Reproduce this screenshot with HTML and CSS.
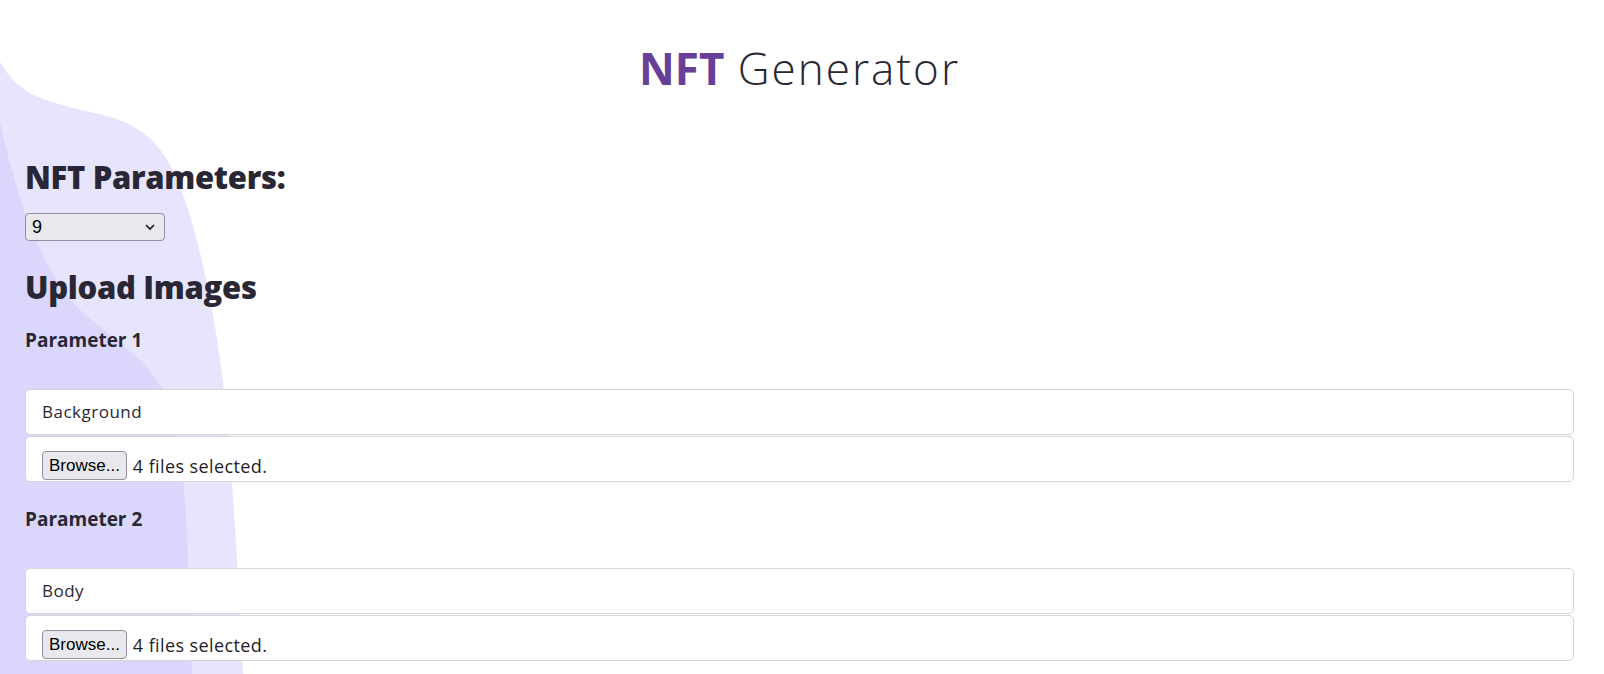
FILE: index.html
```html
<!DOCTYPE html>
<html lang="en">
<head>
<meta charset="utf-8">
<title>NFT Generator</title>
<link rel="stylesheet" href="styles.css">
</head>
<body>
<svg class="blob" width="300" height="674" viewBox="0 0 300 674" aria-hidden="true">
  <path class="blob-light" d="M0 62 C 20 95, 40 100, 90 112 C 140 122, 165 140, 185 200 C 205 260, 220 340, 228 430 C 235 520, 240 600, 243 674 L 0 674 Z"/>
  <path class="blob-dark" d="M0 123 C 18 200, 40 270, 80 310 C 120 345, 150 360, 168 400 C 182 440, 186 500, 188 560 C 190 610, 191 650, 192 674 L 0 674 Z"/>
</svg>
<main class="page">
  <h1 class="title"><span class="title-accent">NFT</span> Generator</h1>

  <h2 class="section-title section-first">NFT Parameters:</h2>
  <div class="select-wrap">
    <select class="param-select">
      <option>9</option>
    </select>
    <svg class="select-chevron" width="12" height="8" viewBox="0 0 12 8"><path d="M2 2 L6 6 L10 2" fill="none" stroke="#1b1b1b" stroke-width="1.6"/></svg>
  </div>

  <h2 class="section-title section-upload">Upload Images</h2>

  <section class="param">
    <h5 class="param-title">Parameter 1</h5>
    <div class="field">Background</div>
    <div class="field field-file"><span class="browse">Browse...</span><span class="file-count">4 files selected.</span></div>
  </section>

  <section class="param">
    <h5 class="param-title">Parameter 2</h5>
    <div class="field">Body</div>
    <div class="field field-file"><span class="browse">Browse...</span><span class="file-count">4 files selected.</span></div>
  </section>
</main>
</body>
</html>
```

FILE: styles.css
```css
html, body {
  margin: 0;
  padding: 0;
  background: #ffffff;
  overflow: hidden;
}

body {
  font-family: "Open Sans", "Noto Sans", sans-serif;
  color: #2a2734;
  position: relative;
  min-height: 674px;
}

.blob {
  position: absolute;
  left: 0;
  top: 0;
  z-index: 0;
}

.blob-light { fill: #e7e5fe; }
.blob-dark { fill: #dad6fc; }

.page {
  position: relative;
  z-index: 1;
  display: flex;
  flex-direction: column;
  align-items: stretch;
  padding: 0 30px 0 25px;
}

.title {
  margin: 43px 0 0;
  text-align: center;
  font-size: 44px;
  line-height: 50px;
  font-weight: 300;
  letter-spacing: 2px;
  color: #2a2734;
}

.title-accent {
  font-weight: 700;
  color: #673f97;
  letter-spacing: 0;
}

.section-title {
  margin: 0;
  font-size: 31px;
  line-height: 38px;
  font-weight: 800;
  letter-spacing: -0.3px;
  color: #2a2734;
}

.section-first { margin-top: 65px; }
.section-upload { margin-top: 27px; }

.select-wrap {
  position: relative;
  width: 140px;
  height: 28px;
  margin-top: 17px;
}

.param-select {
  appearance: none;
  -webkit-appearance: none;
  width: 140px;
  height: 28px;
  margin: 0;
  padding: 0 0 0 6px;
  border: 1px solid #8f8f9d;
  border-radius: 4px;
  background: #e9e9ed;
  font-family: "Liberation Sans", Arial, sans-serif;
  font-size: 18px;
  color: #000;
}

.select-chevron {
  position: absolute;
  right: 9px;
  top: 10px;
  pointer-events: none;
}

.param {
  display: flex;
  flex-direction: column;
}

.param-title {
  margin: 22px 0 0;
  font-size: 19px;
  line-height: 24px;
  font-weight: 700;
  color: #2a2734;
}

.param + .param .param-title { margin-top: 25px; }

.field {
  box-sizing: border-box;
  height: 46px;
  background: #ffffff;
  border: 1px solid #d5d5d8;
  border-radius: 5px;
  padding: 0 16px;
  font-size: 17px;
  font-weight: 500;
  letter-spacing: 0.5px;
  line-height: 44px;
  color: #2a2734;
}

.param-title + .field { margin-top: 37px; }

.field-file {
  margin-top: 1px;
  display: flex;
  align-items: flex-start;
  padding-top: 14px;
  line-height: normal;
  letter-spacing: 0;
}

.browse {
  box-sizing: border-box;
  height: 29px;
  padding: 0 6px;
  border: 1px solid #8f8f9d;
  border-radius: 4px;
  background: #e9e9ed;
  font-family: "Liberation Sans", Arial, sans-serif;
  font-size: 17px;
  font-weight: 400;
  line-height: 27px;
  color: #000;
}

.file-count {
  margin-left: 6px;
  font-size: 18px;
  letter-spacing: 0.4px;
  line-height: 31px;
  color: #1f1d26;
}
```
